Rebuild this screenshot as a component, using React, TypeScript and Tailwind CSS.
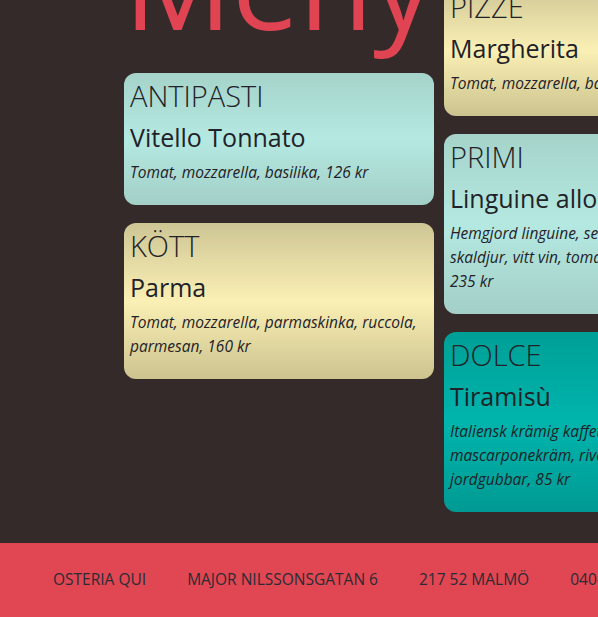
import React from "react";

const font = { fontFamily: '"Open Sans", "Noto Sans", sans-serif' };

type Item = {
  cat: string;
  dish: string;
  desc: React.ReactNode;
  tone: "teal" | "sand" | "deep";
};

const toneClass: Record<Item["tone"], string> = {
  teal: "bg-[linear-gradient(180deg,#a5d3ca_0%,#b4e9e1_50%,#a3cfc7_100%)]",
  sand: "bg-[linear-gradient(180deg,#cdc594_0%,#faf0b5_50%,#ccc38f_100%)]",
  deep: "bg-[linear-gradient(180deg,#009f96_0%,#00b5ad_50%,#009a93_100%)]",
};

function Card({ item }: { item: Item }) {
  return (
    <div
      className={`w-[310px] shrink-0 rounded-[12px] px-[6px] pt-[5px] pb-[21px] text-[#1f2228] ${toneClass[item.tone]}`}
    >
      <div className="text-[29px] leading-[36px] font-light">{item.cat}</div>
      <div className="mt-[6px] text-[25px] leading-[34px]">{item.dish}</div>
      <div className="mt-[6px] text-[15.5px] leading-[24px] italic whitespace-nowrap">{item.desc}</div>
    </div>
  );
}

const left: Item[] = [
  { cat: "ANTIPASTI", dish: "Vitello Tonnato", desc: "Tomat, mozzarella, basilika, 126 kr", tone: "teal" },
  {
    cat: "KÖTT",
    dish: "Parma",
    desc: (
      <>
        Tomat, mozzarella, parmaskinka, ruccola,
        <br />
        parmesan, 160 kr
      </>
    ),
    tone: "sand",
  },
];

const right: Item[] = [
  { cat: "PIZZE", dish: "Margherita", desc: "Tomat, mozzarella, basilika, 110 kr", tone: "sand" },
  {
    cat: "PRIMI",
    dish: "Linguine allo scoglio",
    desc: (
      <>
        Hemgjord linguine, serveras med färska
        <br />
        skaldjur, vitt vin, tomat och persilja,
        <br />
        235 kr
      </>
    ),
    tone: "teal",
  },
  {
    cat: "DOLCE",
    dish: "Tiramisù",
    desc: (
      <>
        Italiensk krämig kaffetårta med
        <br />
        mascarponekräm, riven choklad och
        <br />
        jordgubbar, 85 kr
      </>
    ),
    tone: "deep",
  },
];

export default function App() {
  return (
    <div className="w-[598px] h-[617px] overflow-hidden bg-[#352a2a] flex flex-col" style={font}>
      <main className="flex gap-[10px] pl-[124px] mt-[-16px] h-[559px] shrink-0">
        <div className="w-[310px] shrink-0 flex flex-col gap-[18px]">
          <div className="h-[71px]">
            <div className="mt-[-60px] text-[120px] leading-[120px] text-[#e04452] whitespace-nowrap">Meny</div>
          </div>
          {left.map((it) => (
            <Card key={it.cat} item={it} />
          ))}
        </div>
        <div className="w-[310px] shrink-0 flex flex-col gap-[18px]">
          {right.map((it) => (
            <Card key={it.cat} item={it} />
          ))}
        </div>
      </main>
      <footer className="h-[74px] shrink-0 bg-[#e04753] flex items-center gap-[41px] pl-[53px] whitespace-nowrap text-[15.5px] text-[#2a2b33] uppercase">
        <span>Osteria Qui</span>
        <span>Major Nilssonsgatan 6</span>
        <span>217 52 Malmö</span>
        <span>040-12 34 56</span>
      </footer>
    </div>
  );
}
